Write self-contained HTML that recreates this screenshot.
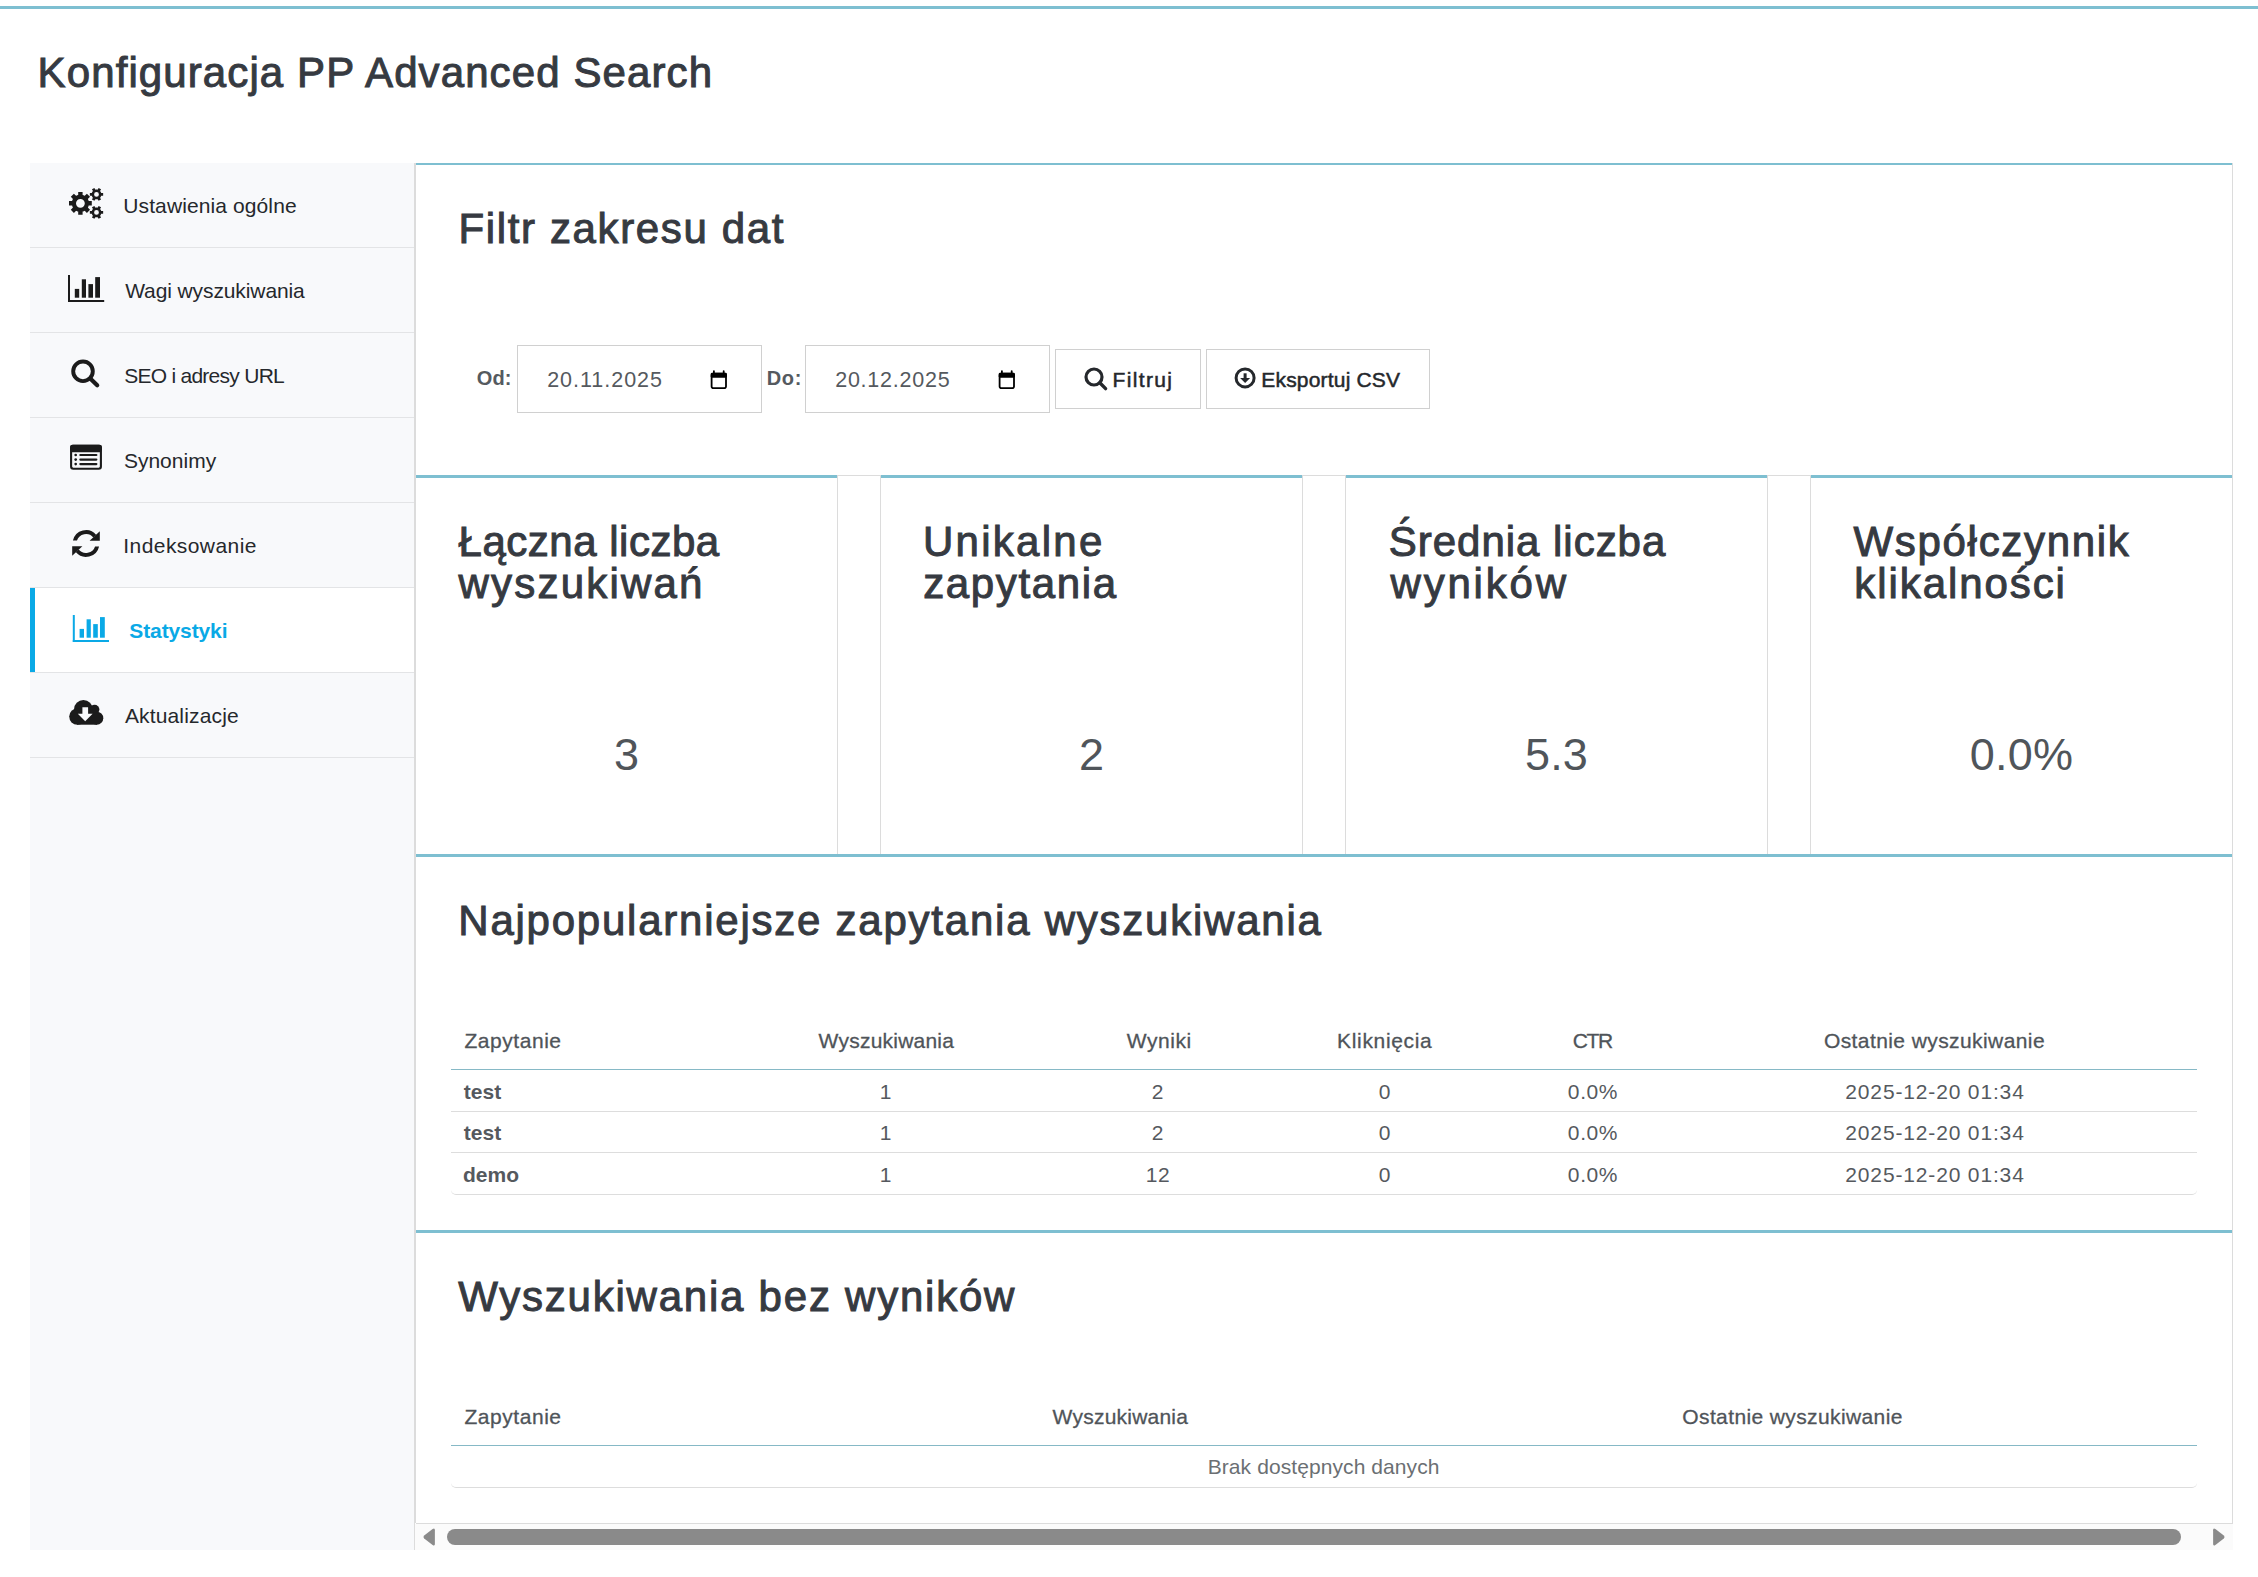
<!DOCTYPE html>
<html><head><meta charset="utf-8"><title>Konfiguracja PP Advanced Search</title>
<style>
html,body{margin:0;padding:0;background:#fff;}
body{width:2258px;height:1577px;overflow:hidden;position:relative;font-family:"Liberation Sans", sans-serif;}
</style></head><body>
<div style="position:absolute;left:0px;top:6px;width:2258px;height:3px;background:#7ebfd1;"></div>
<div style="position:absolute;left:37.60px;top:51.74px;font-size:42px;line-height:42px;color:#363a41;font-weight:normal;white-space:nowrap;-webkit-text-stroke:1px currentColor;letter-spacing:1.103px;">Konfiguracja PP Advanced Search</div>
<div style="position:absolute;left:30px;top:163px;width:384px;height:1387px;background:#f8f9fb;"></div>
<div style="position:absolute;left:414px;top:163px;width:1px;height:1387px;background:#dcdcdc;"></div>
<div style="position:absolute;left:30px;top:247px;width:384px;height:1px;background:#e3e4e6;"></div>
<div style="position:absolute;left:30px;top:332px;width:384px;height:1px;background:#e3e4e6;"></div>
<div style="position:absolute;left:30px;top:417px;width:384px;height:1px;background:#e3e4e6;"></div>
<div style="position:absolute;left:30px;top:502px;width:384px;height:1px;background:#e3e4e6;"></div>
<div style="position:absolute;left:30px;top:587px;width:384px;height:1px;background:#e3e4e6;"></div>
<div style="position:absolute;left:30px;top:672px;width:384px;height:1px;background:#e3e4e6;"></div>
<div style="position:absolute;left:30px;top:757px;width:384px;height:1px;background:#e3e4e6;"></div>
<div style="position:absolute;left:30px;top:588px;width:384px;height:84px;background:#ffffff;"></div>
<div style="position:absolute;left:30px;top:588px;width:5px;height:84px;background:#0aa9e6;"></div>
<div style="position:absolute;left:30px;top:587px;width:384px;height:1px;background:#e3e4e6;"></div>
<div style="position:absolute;left:30px;top:672px;width:384px;height:1px;background:#e3e4e6;"></div>
<div style="position:absolute;left:123.30px;top:195.12px;font-size:21px;line-height:21px;color:#25282c;font-weight:normal;white-space:nowrap;letter-spacing:0.106px;">Ustawienia ogólne</div>
<div style="position:absolute;left:125.20px;top:280.12px;font-size:21px;line-height:21px;color:#25282c;font-weight:normal;white-space:nowrap;letter-spacing:-0.106px;">Wagi wyszukiwania</div>
<div style="position:absolute;left:124.20px;top:365.12px;font-size:21px;line-height:21px;color:#25282c;font-weight:normal;white-space:nowrap;letter-spacing:-0.733px;">SEO i adresy URL</div>
<div style="position:absolute;left:123.90px;top:450.12px;font-size:21px;line-height:21px;color:#25282c;font-weight:normal;white-space:nowrap;letter-spacing:0.014px;">Synonimy</div>
<div style="position:absolute;left:123.30px;top:535.12px;font-size:21px;line-height:21px;color:#25282c;font-weight:normal;white-space:nowrap;letter-spacing:0.427px;">Indeksowanie</div>
<div style="position:absolute;left:129.30px;top:620.12px;font-size:21px;line-height:21px;color:#0aa9e6;font-weight:bold;white-space:nowrap;letter-spacing:-0.111px;">Statystyki</div>
<div style="position:absolute;left:124.90px;top:705.12px;font-size:21px;line-height:21px;color:#25282c;font-weight:normal;white-space:nowrap;letter-spacing:0.155px;">Aktualizacje</div>
<svg style="position:absolute;left:0px;top:0px" width="120" height="240" viewBox="0 0 120 240"><path fill="#1b1b1b" fill-rule="evenodd" d="M78.20,194.99 L78.20,191.91 L82.60,191.91 L82.60,194.99 L82.97,195.09 L83.33,195.22 L83.69,195.35 L84.04,195.51 L84.39,195.68 L84.72,195.87 L86.90,193.69 L90.01,196.80 L87.83,198.98 L88.02,199.31 L88.19,199.66 L88.35,200.01 L88.48,200.37 L88.61,200.73 L88.71,201.10 L91.79,201.10 L91.79,205.50 L88.71,205.50 L88.61,205.87 L88.48,206.23 L88.35,206.59 L88.19,206.94 L88.02,207.29 L87.83,207.62 L90.01,209.80 L86.90,212.91 L84.72,210.73 L84.39,210.92 L84.04,211.09 L83.69,211.25 L83.33,211.38 L82.97,211.51 L82.60,211.61 L82.60,214.69 L78.20,214.69 L78.20,211.61 L77.83,211.51 L77.47,211.38 L77.11,211.25 L76.76,211.09 L76.41,210.92 L76.08,210.73 L73.90,212.91 L70.79,209.80 L72.97,207.62 L72.78,207.29 L72.61,206.94 L72.45,206.59 L72.32,206.23 L72.19,205.87 L72.09,205.50 L69.01,205.50 L69.01,201.10 L72.09,201.10 L72.19,200.73 L72.32,200.37 L72.45,200.01 L72.61,199.66 L72.78,199.31 L72.97,198.98 L70.79,196.80 L73.90,193.69 L76.08,195.87 L76.41,195.68 L76.76,195.51 L77.11,195.35 L77.47,195.22 L77.83,195.09 Z M84.80,203.30 A4.4,4.4 0 1 0 76.00,203.30 A4.4,4.4 0 1 0 84.80,203.30 Z M101.20,193.00 L103.15,193.00 L103.15,195.80 L101.20,195.80 L101.07,196.16 L100.92,196.51 L100.74,196.85 L100.54,197.17 L100.31,197.48 L100.06,197.77 L101.04,199.46 L98.61,200.86 L97.64,199.17 L97.26,199.24 L96.88,199.29 L96.50,199.30 L96.12,199.29 L95.74,199.24 L95.36,199.17 L94.39,200.86 L91.96,199.46 L92.94,197.77 L92.69,197.48 L92.46,197.17 L92.26,196.85 L92.08,196.51 L91.93,196.16 L91.80,195.80 L89.85,195.80 L89.85,193.00 L91.80,193.00 L91.93,192.64 L92.08,192.29 L92.26,191.95 L92.46,191.63 L92.69,191.32 L92.94,191.03 L91.96,189.34 L94.39,187.94 L95.36,189.63 L95.74,189.56 L96.12,189.51 L96.50,189.50 L96.88,189.51 L97.26,189.56 L97.64,189.63 L98.61,187.94 L101.04,189.34 L100.06,191.03 L100.31,191.32 L100.54,191.63 L100.74,191.95 L100.92,192.29 L101.07,192.64 Z M98.90,194.40 A2.4,2.4 0 1 0 94.10,194.40 A2.4,2.4 0 1 0 98.90,194.40 Z M101.20,211.00 L103.15,211.00 L103.15,213.80 L101.20,213.80 L101.07,214.16 L100.92,214.51 L100.74,214.85 L100.54,215.17 L100.31,215.48 L100.06,215.77 L101.04,217.46 L98.61,218.86 L97.64,217.17 L97.26,217.24 L96.88,217.29 L96.50,217.30 L96.12,217.29 L95.74,217.24 L95.36,217.17 L94.39,218.86 L91.96,217.46 L92.94,215.77 L92.69,215.48 L92.46,215.17 L92.26,214.85 L92.08,214.51 L91.93,214.16 L91.80,213.80 L89.85,213.80 L89.85,211.00 L91.80,211.00 L91.93,210.64 L92.08,210.29 L92.26,209.95 L92.46,209.63 L92.69,209.32 L92.94,209.03 L91.96,207.34 L94.39,205.94 L95.36,207.63 L95.74,207.56 L96.12,207.51 L96.50,207.50 L96.88,207.51 L97.26,207.56 L97.64,207.63 L98.61,205.94 L101.04,207.34 L100.06,209.03 L100.31,209.32 L100.54,209.63 L100.74,209.95 L100.92,210.29 L101.07,210.64 Z M98.90,212.40 A2.4,2.4 0 1 0 94.10,212.40 A2.4,2.4 0 1 0 98.90,212.40 Z"/></svg>
<svg style="position:absolute;left:0px;top:0px" width="120" height="320" viewBox="0 0 120 320"><rect x="68" y="275" width="2" height="27" fill="#1b1b1b"/><rect x="68" y="300" width="36.2" height="2" fill="#1b1b1b"/><rect x="74.8" y="288.9" width="4.4" height="8.8" fill="#1b1b1b"/><rect x="81.8" y="279.3" width="4.2" height="18.4" fill="#1b1b1b"/><rect x="88.4" y="284.1" width="4.6" height="13.6" fill="#1b1b1b"/><rect x="95.2" y="277.1" width="4.8" height="20.6" fill="#1b1b1b"/></svg>
<svg style="position:absolute;left:0px;top:0px" width="120" height="700" viewBox="0 0 120 700"><rect x="72.8" y="615" width="2" height="27" fill="#0aa9e6"/><rect x="72.8" y="640" width="36.2" height="2" fill="#0aa9e6"/><rect x="79.6" y="628.9" width="4.4" height="8.8" fill="#0aa9e6"/><rect x="86.6" y="619.3" width="4.2" height="18.4" fill="#0aa9e6"/><rect x="93.2" y="624.1" width="4.6" height="13.6" fill="#0aa9e6"/><rect x="100.0" y="617.1" width="4.8" height="20.6" fill="#0aa9e6"/></svg>
<svg style="position:absolute;left:0px;top:0px" width="120" height="400" viewBox="0 0 120 400"><circle cx="83" cy="371.3" r="9.8" fill="none" stroke="#1b1b1b" stroke-width="3.9"/><line x1="90.5" y1="378.8" x2="97.2" y2="385.3" stroke="#1b1b1b" stroke-width="4.2" stroke-linecap="round"/></svg>
<svg style="position:absolute;left:0px;top:0px" width="120" height="480" viewBox="0 0 120 480"><rect x="71.1" y="445.8" width="29.8" height="23" rx="2.2" fill="none" stroke="#1b1b1b" stroke-width="2.1"/><rect x="70.1" y="444.8" width="31.8" height="7.4" rx="2.2" fill="#1b1b1b"/><circle cx="75.7" cy="455" r="1.35" fill="#1b1b1b"/><line x1="80.3" y1="455" x2="96.4" y2="455" stroke="#1b1b1b" stroke-width="2.1" stroke-linecap="round"/><circle cx="75.7" cy="459.6" r="1.35" fill="#1b1b1b"/><line x1="80.3" y1="459.6" x2="96.4" y2="459.6" stroke="#1b1b1b" stroke-width="2.1" stroke-linecap="round"/><circle cx="75.7" cy="464.1" r="1.35" fill="#1b1b1b"/><line x1="80.3" y1="464.1" x2="96.4" y2="464.1" stroke="#1b1b1b" stroke-width="2.1" stroke-linecap="round"/></svg>
<svg style="position:absolute;left:0px;top:0px" width="120" height="570" viewBox="0 0 120 570"><path d="M72.92,540.6 A13.4,13.4 0 0 1 96.26,534.89 L93.28,537.39 A9.5,9.5 0 0 0 76.95,540.6 Z" fill="#1b1b1b"/><polygon points="99.8,531.2 99.8,540.7 89.6,540.7" fill="#1b1b1b"/><g transform="rotate(180 86 543.5)"><path d="M72.92,540.6 A13.4,13.4 0 0 1 96.26,534.89 L93.28,537.39 A9.5,9.5 0 0 0 76.95,540.6 Z" fill="#1b1b1b"/><polygon points="99.8,531.2 99.8,540.7 89.6,540.7" fill="#1b1b1b"/></g></svg>
<svg style="position:absolute;left:0px;top:0px" width="120" height="740" viewBox="0 0 120 740"><circle cx="83.4" cy="709.4" r="9.4" fill="#1b1b1b"/><circle cx="77.4" cy="716.6" r="8.2" fill="#1b1b1b"/><circle cx="94.6" cy="709.6" r="4.8" fill="#1b1b1b"/><circle cx="96.8" cy="718.2" r="6.5" fill="#1b1b1b"/><rect x="77" y="710" width="20" height="14.7" fill="#1b1b1b"/><polygon points="82.4,707.2 88.1,707.2 88.1,713.8 92.6,713.8 85.2,721.2 77.8,713.8 82.4,713.8" fill="#f8f9fb"/></svg>
<div style="position:absolute;left:415px;top:163px;width:1px;height:1360px;background:#dcdcdc;"></div>
<div style="position:absolute;left:2232px;top:163px;width:1px;height:1360px;background:#dcdcdc;"></div>
<div style="position:absolute;left:416px;top:163px;width:1816px;height:2px;background:#7ebfd1;"></div>
<div style="position:absolute;left:416px;top:475px;width:1816px;height:1px;background:#dcdcdc;"></div>
<div style="position:absolute;left:458.50px;top:207.84px;font-size:42px;line-height:42px;color:#363a41;font-weight:normal;white-space:nowrap;-webkit-text-stroke:1px currentColor;letter-spacing:1.638px;">Filtr zakresu dat</div>
<div style="position:absolute;left:476.70px;top:367.67px;font-size:20px;line-height:20px;color:#555a5f;font-weight:bold;white-space:nowrap;letter-spacing:0.150px;">Od:</div>
<div style="position:absolute;left:766.70px;top:367.67px;font-size:20px;line-height:20px;color:#555a5f;font-weight:bold;white-space:nowrap;letter-spacing:0.650px;">Do:</div>
<div style="position:absolute;left:517px;top:345px;width:245px;height:68px;box-sizing:border-box;border:1px solid #d0d0d0;background:#fff;"></div>
<div style="position:absolute;left:547.20px;top:370.30px;font-size:21.5px;line-height:21.5px;color:#55595e;font-weight:normal;white-space:nowrap;letter-spacing:0.978px;">20.11.2025</div>
<svg style="position:absolute;left:710px;top:369.8px" width="18" height="19" viewBox="0 0 18 19"><rect x="1.6" y="3.6" width="14.4" height="14.6" rx="1.6" fill="none" stroke="#000" stroke-width="1.8"/><rect x="0.7" y="2.7" width="16.2" height="5" rx="1.4" fill="#000"/><rect x="3" y="0.2" width="1.8" height="3.5" rx="0.9" fill="#000"/><rect x="12.8" y="0.2" width="1.8" height="3.5" rx="0.9" fill="#000"/></svg>
<div style="position:absolute;left:805px;top:345px;width:245px;height:68px;box-sizing:border-box;border:1px solid #d0d0d0;background:#fff;"></div>
<div style="position:absolute;left:835.20px;top:370.30px;font-size:21.5px;line-height:21.5px;color:#55595e;font-weight:normal;white-space:nowrap;letter-spacing:0.756px;">20.12.2025</div>
<svg style="position:absolute;left:998px;top:369.8px" width="18" height="19" viewBox="0 0 18 19"><rect x="1.6" y="3.6" width="14.4" height="14.6" rx="1.6" fill="none" stroke="#000" stroke-width="1.8"/><rect x="0.7" y="2.7" width="16.2" height="5" rx="1.4" fill="#000"/><rect x="3" y="0.2" width="1.8" height="3.5" rx="0.9" fill="#000"/><rect x="12.8" y="0.2" width="1.8" height="3.5" rx="0.9" fill="#000"/></svg>
<div style="position:absolute;left:1055px;top:349px;width:146px;height:60px;box-sizing:border-box;border:1px solid #d0d0d0;background:#fff;"></div>
<svg style="position:absolute;left:1070px;top:355px" width="45" height="45" viewBox="0 0 45 45"><circle cx="24" cy="22" r="8" fill="none" stroke="#25282c" stroke-width="3.2"/><line x1="29.8" y1="27.8" x2="35.6" y2="33.6" stroke="#25282c" stroke-width="3.4" stroke-linecap="round"/></svg>
<div style="position:absolute;left:1112.50px;top:369.22px;font-size:21px;line-height:21px;color:#25282c;font-weight:normal;white-space:nowrap;-webkit-text-stroke:0.5px currentColor;letter-spacing:1.367px;">Filtruj</div>
<div style="position:absolute;left:1206px;top:349px;width:224px;height:60px;box-sizing:border-box;border:1px solid #d0d0d0;background:#fff;"></div>
<svg style="position:absolute;left:1220px;top:355px" width="45" height="45" viewBox="0 0 45 45"><circle cx="25.1" cy="22.9" r="9" fill="none" stroke="#25282c" stroke-width="3"/><rect x="23.6" y="18.3" width="3" height="5.5" fill="#25282c"/><polygon points="20.1,23 30.1,23 25.1,27.9" fill="#25282c"/></svg>
<div style="position:absolute;left:1261.30px;top:369.22px;font-size:21px;line-height:21px;color:#25282c;font-weight:normal;white-space:nowrap;-webkit-text-stroke:0.5px currentColor;letter-spacing:0.183px;">Eksportuj CSV</div>
<div style="position:absolute;left:415px;top:475px;width:1px;height:380px;background:#dcdcdc;"></div>
<div style="position:absolute;left:837px;top:475px;width:1px;height:380px;background:#dcdcdc;"></div>
<div style="position:absolute;left:416px;top:475px;width:421px;height:3px;background:#7ebfd1;"></div>
<div style="position:absolute;left:458.60px;top:520.84px;font-size:42px;line-height:42px;color:#363a41;font-weight:normal;white-space:nowrap;-webkit-text-stroke:1px currentColor;letter-spacing:0.508px;">Łączna liczba</div>
<div style="position:absolute;left:458.60px;top:562.94px;font-size:42px;line-height:42px;color:#363a41;font-weight:normal;white-space:nowrap;-webkit-text-stroke:1px currentColor;letter-spacing:2.200px;">wyszukiwań</div>
<div style="position:absolute;left:426.50px;top:732.10px;width:400px;text-align:center;font-size:45px;line-height:45px;color:#50555a;font-weight:normal;white-space:nowrap;letter-spacing:0.2px;">3</div>
<div style="position:absolute;left:880px;top:475px;width:1px;height:380px;background:#dcdcdc;"></div>
<div style="position:absolute;left:1302px;top:475px;width:1px;height:380px;background:#dcdcdc;"></div>
<div style="position:absolute;left:881px;top:475px;width:421px;height:3px;background:#7ebfd1;"></div>
<div style="position:absolute;left:923.00px;top:520.84px;font-size:42px;line-height:42px;color:#363a41;font-weight:normal;white-space:nowrap;-webkit-text-stroke:1px currentColor;letter-spacing:2.271px;">Unikalne</div>
<div style="position:absolute;left:923.20px;top:562.94px;font-size:42px;line-height:42px;color:#363a41;font-weight:normal;white-space:nowrap;-webkit-text-stroke:1px currentColor;letter-spacing:1.637px;">zapytania</div>
<div style="position:absolute;left:891.50px;top:732.10px;width:400px;text-align:center;font-size:45px;line-height:45px;color:#50555a;font-weight:normal;white-space:nowrap;letter-spacing:0.2px;">2</div>
<div style="position:absolute;left:1345px;top:475px;width:1px;height:380px;background:#dcdcdc;"></div>
<div style="position:absolute;left:1767px;top:475px;width:1px;height:380px;background:#dcdcdc;"></div>
<div style="position:absolute;left:1346px;top:475px;width:421px;height:3px;background:#7ebfd1;"></div>
<div style="position:absolute;left:1388.80px;top:520.84px;font-size:42px;line-height:42px;color:#363a41;font-weight:normal;white-space:nowrap;-webkit-text-stroke:1px currentColor;letter-spacing:0.977px;">Średnia liczba</div>
<div style="position:absolute;left:1390.50px;top:562.94px;font-size:42px;line-height:42px;color:#363a41;font-weight:normal;white-space:nowrap;-webkit-text-stroke:1px currentColor;letter-spacing:2.800px;">wyników</div>
<div style="position:absolute;left:1356.50px;top:732.10px;width:400px;text-align:center;font-size:45px;line-height:45px;color:#50555a;font-weight:normal;white-space:nowrap;letter-spacing:0.2px;">5.3</div>
<div style="position:absolute;left:1810px;top:475px;width:1px;height:380px;background:#dcdcdc;"></div>
<div style="position:absolute;left:2232px;top:475px;width:1px;height:380px;background:#dcdcdc;"></div>
<div style="position:absolute;left:1811px;top:475px;width:421px;height:3px;background:#7ebfd1;"></div>
<div style="position:absolute;left:1853.50px;top:520.84px;font-size:42px;line-height:42px;color:#363a41;font-weight:normal;white-space:nowrap;-webkit-text-stroke:1px currentColor;letter-spacing:1.691px;">Współczynnik</div>
<div style="position:absolute;left:1854.30px;top:562.94px;font-size:42px;line-height:42px;color:#363a41;font-weight:normal;white-space:nowrap;-webkit-text-stroke:1px currentColor;letter-spacing:1.920px;">klikalności</div>
<div style="position:absolute;left:1821.50px;top:732.10px;width:400px;text-align:center;font-size:45px;line-height:45px;color:#50555a;font-weight:normal;white-space:nowrap;letter-spacing:0.2px;">0.0%</div>
<div style="position:absolute;left:416px;top:854px;width:1816px;height:3px;background:#7ebfd1;"></div>
<div style="position:absolute;left:458.30px;top:899.74px;font-size:42px;line-height:42px;color:#363a41;font-weight:normal;white-space:nowrap;-webkit-text-stroke:1px currentColor;letter-spacing:1.764px;">Najpopularniejsze zapytania wyszukiwania</div>
<div style="position:absolute;left:464.50px;top:1030.42px;font-size:21px;line-height:21px;color:#4f5459;font-weight:normal;white-space:nowrap;-webkit-text-stroke:0.3px currentColor;letter-spacing:0.537px;">Zapytanie</div>
<div style="position:absolute;left:818.60px;top:1030.42px;font-size:21px;line-height:21px;color:#4f5459;font-weight:normal;white-space:nowrap;-webkit-text-stroke:0.3px currentColor;letter-spacing:0.227px;">Wyszukiwania</div>
<div style="position:absolute;left:1126.80px;top:1030.42px;font-size:21px;line-height:21px;color:#4f5459;font-weight:normal;white-space:nowrap;-webkit-text-stroke:0.3px currentColor;letter-spacing:0.560px;">Wyniki</div>
<div style="position:absolute;left:1337.10px;top:1030.42px;font-size:21px;line-height:21px;color:#4f5459;font-weight:normal;white-space:nowrap;-webkit-text-stroke:0.3px currentColor;letter-spacing:0.656px;">Kliknięcia</div>
<div style="position:absolute;left:1572.70px;top:1030.42px;font-size:21px;line-height:21px;color:#4f5459;font-weight:normal;white-space:nowrap;-webkit-text-stroke:0.3px currentColor;letter-spacing:-1.350px;">CTR</div>
<div style="position:absolute;left:1823.90px;top:1030.42px;font-size:21px;line-height:21px;color:#4f5459;font-weight:normal;white-space:nowrap;-webkit-text-stroke:0.3px currentColor;letter-spacing:0.415px;">Ostatnie wyszukiwanie</div>
<div style="position:absolute;left:451px;top:1069px;width:1746px;height:1px;background:#86b9c6;"></div>
<div style="position:absolute;left:463.70px;top:1081.02px;font-size:21px;line-height:21px;color:#55595e;font-weight:bold;white-space:nowrap;letter-spacing:0.067px;">test</div>
<div style="position:absolute;left:686.00px;top:1081.02px;width:400px;text-align:center;font-size:21px;line-height:21px;color:#55595e;font-weight:normal;white-space:nowrap;letter-spacing:0.6px;">1</div>
<div style="position:absolute;left:958.00px;top:1081.02px;width:400px;text-align:center;font-size:21px;line-height:21px;color:#55595e;font-weight:normal;white-space:nowrap;letter-spacing:0.6px;">2</div>
<div style="position:absolute;left:1185.00px;top:1081.02px;width:400px;text-align:center;font-size:21px;line-height:21px;color:#55595e;font-weight:normal;white-space:nowrap;letter-spacing:0.6px;">0</div>
<div style="position:absolute;left:1393.00px;top:1081.02px;width:400px;text-align:center;font-size:21px;line-height:21px;color:#55595e;font-weight:normal;white-space:nowrap;letter-spacing:0.6px;">0.0%</div>
<div style="position:absolute;left:1845.30px;top:1081.02px;font-size:21px;line-height:21px;color:#55595e;font-weight:normal;white-space:nowrap;letter-spacing:0.847px;">2025-12-20 01:34</div>
<div style="position:absolute;left:451px;top:1111px;width:1746px;height:1px;background:#dddddd;"></div>
<div style="position:absolute;left:463.70px;top:1122.02px;font-size:21px;line-height:21px;color:#55595e;font-weight:bold;white-space:nowrap;letter-spacing:0.067px;">test</div>
<div style="position:absolute;left:686.00px;top:1122.02px;width:400px;text-align:center;font-size:21px;line-height:21px;color:#55595e;font-weight:normal;white-space:nowrap;letter-spacing:0.6px;">1</div>
<div style="position:absolute;left:958.00px;top:1122.02px;width:400px;text-align:center;font-size:21px;line-height:21px;color:#55595e;font-weight:normal;white-space:nowrap;letter-spacing:0.6px;">2</div>
<div style="position:absolute;left:1185.00px;top:1122.02px;width:400px;text-align:center;font-size:21px;line-height:21px;color:#55595e;font-weight:normal;white-space:nowrap;letter-spacing:0.6px;">0</div>
<div style="position:absolute;left:1393.00px;top:1122.02px;width:400px;text-align:center;font-size:21px;line-height:21px;color:#55595e;font-weight:normal;white-space:nowrap;letter-spacing:0.6px;">0.0%</div>
<div style="position:absolute;left:1845.30px;top:1122.02px;font-size:21px;line-height:21px;color:#55595e;font-weight:normal;white-space:nowrap;letter-spacing:0.847px;">2025-12-20 01:34</div>
<div style="position:absolute;left:451px;top:1152px;width:1746px;height:1px;background:#dddddd;"></div>
<div style="position:absolute;left:463.00px;top:1163.82px;font-size:21px;line-height:21px;color:#55595e;font-weight:bold;white-space:nowrap;">demo</div>
<div style="position:absolute;left:686.00px;top:1163.82px;width:400px;text-align:center;font-size:21px;line-height:21px;color:#55595e;font-weight:normal;white-space:nowrap;letter-spacing:0.6px;">1</div>
<div style="position:absolute;left:958.00px;top:1163.82px;width:400px;text-align:center;font-size:21px;line-height:21px;color:#55595e;font-weight:normal;white-space:nowrap;letter-spacing:0.6px;">12</div>
<div style="position:absolute;left:1185.00px;top:1163.82px;width:400px;text-align:center;font-size:21px;line-height:21px;color:#55595e;font-weight:normal;white-space:nowrap;letter-spacing:0.6px;">0</div>
<div style="position:absolute;left:1393.00px;top:1163.82px;width:400px;text-align:center;font-size:21px;line-height:21px;color:#55595e;font-weight:normal;white-space:nowrap;letter-spacing:0.6px;">0.0%</div>
<div style="position:absolute;left:1845.30px;top:1163.82px;font-size:21px;line-height:21px;color:#55595e;font-weight:normal;white-space:nowrap;letter-spacing:0.847px;">2025-12-20 01:34</div>
<div style="position:absolute;left:451px;top:1150px;width:1746px;height:45px;box-sizing:border-box;border:none;background:transparent;border-bottom:1px solid #dddddd;border-radius:0 0 5px 5px;"></div>
<div style="position:absolute;left:416px;top:1230px;width:1816px;height:3px;background:#7ebfd1;"></div>
<div style="position:absolute;left:458.20px;top:1275.74px;font-size:42px;line-height:42px;color:#363a41;font-weight:normal;white-space:nowrap;-webkit-text-stroke:1px currentColor;letter-spacing:1.774px;">Wyszukiwania bez wyników</div>
<div style="position:absolute;left:464.50px;top:1406.32px;font-size:21px;line-height:21px;color:#4f5459;font-weight:normal;white-space:nowrap;-webkit-text-stroke:0.3px currentColor;letter-spacing:0.537px;">Zapytanie</div>
<div style="position:absolute;left:1052.60px;top:1406.32px;font-size:21px;line-height:21px;color:#4f5459;font-weight:normal;white-space:nowrap;-webkit-text-stroke:0.3px currentColor;letter-spacing:0.227px;">Wyszukiwania</div>
<div style="position:absolute;left:1682.30px;top:1406.32px;font-size:21px;line-height:21px;color:#4f5459;font-weight:normal;white-space:nowrap;-webkit-text-stroke:0.3px currentColor;letter-spacing:0.385px;">Ostatnie wyszukiwanie</div>
<div style="position:absolute;left:451px;top:1445px;width:1746px;height:1px;background:#86b9c6;"></div>
<div style="position:absolute;left:1207.70px;top:1456.32px;font-size:21px;line-height:21px;color:#6b6f73;font-weight:normal;white-space:nowrap;letter-spacing:0.086px;">Brak dostępnych danych</div>
<div style="position:absolute;left:451px;top:1440px;width:1746px;height:48px;box-sizing:border-box;border:none;background:transparent;border-bottom:1px solid #dddddd;border-radius:0 0 5px 5px;"></div>
<div style="position:absolute;left:416px;top:1523px;width:1817px;height:1px;background:#dcdcdc;"></div>
<div style="position:absolute;left:414px;top:1524px;width:1819px;height:26px;background:#fbfbfb;"></div>
<div style="position:absolute;left:414px;top:1524px;width:1px;height:26px;background:#dcdcdc;"></div>
<svg style="position:absolute;left:420px;top:1526px" width="20" height="22" viewBox="0 0 20 22"><path d="M4.2,9.6 Q2.6,11 4.2,12.4 L12.6,19 Q14.9,20.6 14.9,17.8 L14.9,4.2 Q14.9,1.4 12.6,3 Z" fill="#8a8a8a"/></svg>
<div style="position:absolute;left:447px;top:1529px;width:1734px;height:16px;background:#8a8a8a;border-radius:8px;"></div>
<svg style="position:absolute;left:2208px;top:1526px" width="20" height="22" viewBox="0 0 20 22"><path d="M15.8,9.6 Q17.4,11 15.8,12.4 L7.4,19 Q5.1,20.6 5.1,17.8 L5.1,4.2 Q5.1,1.4 7.4,3 Z" fill="#8a8a8a"/></svg>
</body></html>
